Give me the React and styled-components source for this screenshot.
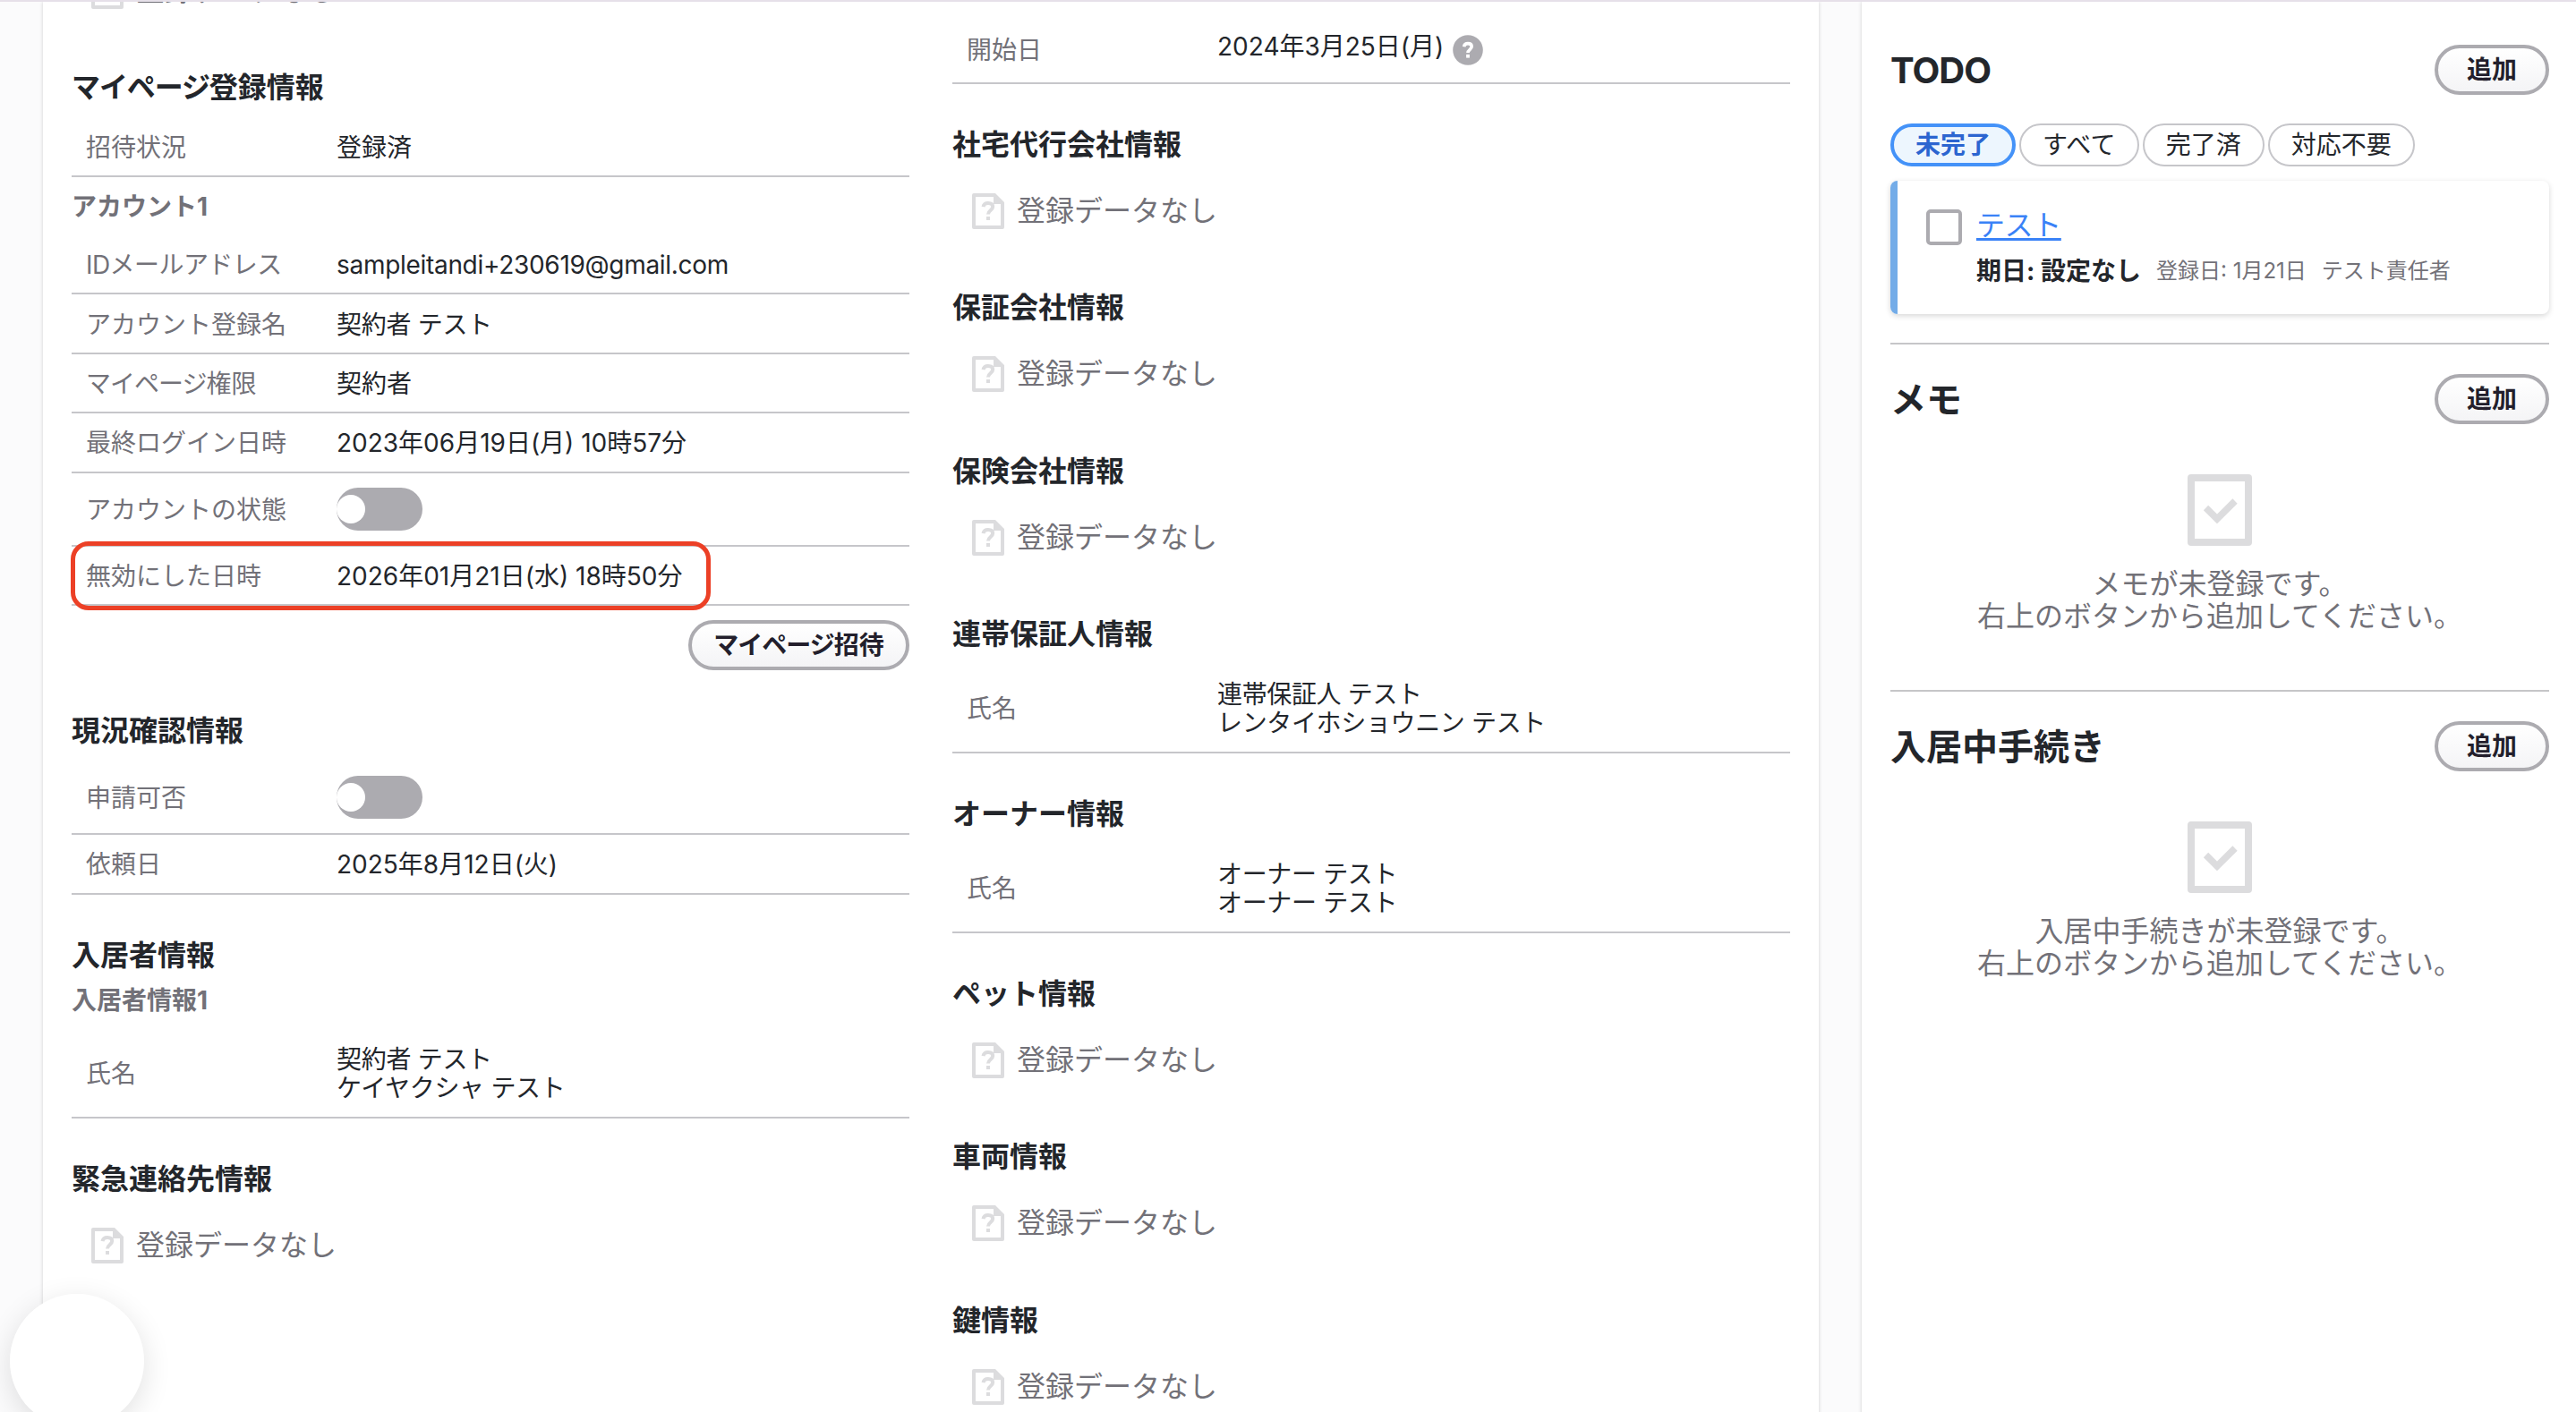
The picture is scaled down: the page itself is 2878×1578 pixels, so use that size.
import styled, { createGlobalStyle } from "styled-components";

const GlobalStyle = createGlobalStyle`
  * {
    box-sizing: border-box;
  }

  body {
    margin: 0;
    overflow: hidden;
    background-color: #fbfbfc;
    color: #23262b;
    font-family: "Inter", "Noto Sans CJK JP", sans-serif;
    font-size: 28px;
    line-height: 32px;
  }
`;

// --- 全体レイアウト ---
const Page = styled.div`
  width: 2880px;
  height: 1578px;
  display: flex;
  gap: 48px;
  padding-left: 48px;
  border-top: 2px solid #e6e0e9;
  overflow: hidden;
`;

const Panel = styled.div`
  height: 1580px;
  padding: 0 32px;
  background-color: #fff;
  box-shadow: 0 0 4px rgba(0, 0, 0, 0.18);
`;

const MainPanel = styled(Panel)`
  width: 1984px;
  display: flex;
  gap: 48px;
`;

const SidePanel = styled(Panel)`
  width: 800px;
`;

const Column = styled.div`
  width: 936px;
  margin-top: ${({ $offset }) => $offset}px;
`;

// --- セクション ---
const Section = styled.section`
  padding-top: 44px;
`;

const SectionTitle = styled.h2`
  margin: 0 0 11.6px;
  padding-top: 2px;
  font-size: 32px;
  font-weight: 700;
  line-height: 44px;
`;

const SubTitle = styled.h3`
  margin: ${({ $spaced }) => ($spaced ? "16px" : "0")} 0 15px;
  font-size: 28px;
  font-weight: 700;
  line-height: 34px;
  color: #727178;
`;

// 長音まわりの字間を詰める
const Tight = styled.span`
  letter-spacing: ${({ $em }) => $em || -0.035}em;
`;

// --- 項目行 ---
const Row = styled.div`
  position: relative;
  height: ${({ $height }) => $height || 66.4}px;
  display: flex;
  align-items: center;
  padding-left: 16px;
  border-bottom: 2px solid #c6c6ca;
`;

const Label = styled.div`
  width: 280px;
  flex-shrink: 0;
  padding-top: 2px;
  color: #727178;
`;

const Value = styled.div`
  display: flex;
  align-items: center;
  gap: 10px;
  padding-top: 2px;
  white-space: pre-line;
  letter-spacing: ${({ $tracking }) => $tracking || 0}px;
`;

const DateText = styled.span`
  padding-bottom: 8px;
`;

const Highlight = styled.div`
  position: absolute;
  top: -6px;
  left: -1px;
  width: 715px;
  height: 77px;
  border: 5px solid #ec4026;
  border-radius: 20px;
`;

const Toggle = styled.div`
  width: 96px;
  height: 48px;
  display: flex;
  align-items: center;
  border-radius: 24px;
  background-color: #acabb0;
`;

const Knob = styled.div`
  width: 32px;
  height: 32px;
  border-radius: 50%;
  background-color: #fff;
`;

// --- データなし ---
const EmptyRow = styled.div`
  display: flex;
  align-items: center;
  gap: 14px;
  padding: 20.4px 0 20.4px 22px;
  font-size: 32px;
  line-height: 40px;
  color: #727178;

  svg {
    display: block;
  }
`;

// --- ボタン ---
const Button = styled.button`
  height: 56px;
  width: ${({ $width }) => $width}px;
  padding: 0;
  border: 4px solid #acabb0;
  border-radius: 28px;
  background: linear-gradient(#fff, #f4f4f6);
  color: #231f2c;
  font-family: inherit;
  font-size: 28px;
  font-weight: 700;
  line-height: 32px;
  white-space: nowrap;
`;

const ButtonArea = styled.div`
  display: flex;
  justify-content: flex-end;
  margin-top: 16px;
`;

// --- サイドパネル ---
const SideSection = styled.section`
  height: 388px;
  padding-top: 33px;

  & + & {
    border-top: 2px solid #c6c6c8;
  }
`;

const TodoSection = styled(SideSection)`
  height: 381px;
  padding-top: 48px;
`;

const SideHeader = styled.div`
  display: flex;
  justify-content: space-between;
  align-items: center;
`;

const SideTitle = styled.h1`
  margin: 0;
  padding-top: 2px;
  font-size: 40px;
  font-weight: 700;
  line-height: 48px;
  letter-spacing: ${({ $tracking }) => $tracking || 0}px;
`;

const Tabs = styled.div`
  display: flex;
  gap: 4px;
  margin-top: 32px;
`;

const Tab = styled.div`
  height: 48px;
  display: flex;
  align-items: center;
  padding: 0 24px;
  border: ${({ $active }) => ($active ? "4px solid #4492f8" : "2px solid #c6c6ca")};
  border-radius: 24px;
  background-color: ${({ $active }) => ($active ? "#edf6fe" : "#fff")};
  color: ${({ $active }) => ($active ? "#2c65d0" : "#23262b")};
  font-weight: ${({ $active }) => ($active ? 700 : 400)};
  letter-spacing: ${({ $tracking }) => $tracking || 0}px;
`;

const Card = styled.div`
  height: 149px;
  display: flex;
  gap: 16px;
  margin-top: 16px;
  padding: 32px;
  border-left: 8px solid #73ace8;
  border-radius: 8px;
  box-shadow: 0 2px 6px rgba(0, 0, 0, 0.16);
`;

const Checkbox = styled.div`
  width: 40px;
  height: 40px;
  border: 4px solid #acabb0;
  border-radius: 5px;
`;

const CardLink = styled.a`
  display: block;
  width: fit-content;
  font-size: 32px;
  line-height: 36px;
  letter-spacing: -0.4px;
  color: #3a82f7;
  text-decoration: underline;
  text-decoration-thickness: 3px;
  text-underline-offset: 3px;
`;

const CardMeta = styled.div`
  display: flex;
  align-items: center;
  gap: 17px;
  margin-top: 17px;
  font-size: 24px;
  color: #727178;
`;

const DueDate = styled.span`
  font-size: 28px;
  font-weight: 700;
  color: #23262b;
`;

const Blank = styled.div`
  display: flex;
  flex-direction: column;
  align-items: center;
  gap: 25px;
  margin-top: 56px;
  font-size: 32px;
  line-height: 36px;
  text-align: center;
  color: #727178;

  svg {
    display: block;
  }
`;

const BlankText = styled.p`
  margin: 0;
  white-space: pre-line;
`;

// --- フローティングボタン ---
const ChatBubble = styled.div`
  position: fixed;
  left: 11px;
  top: 1446px;
  width: 150px;
  height: 150px;
  border-radius: 50%;
  background-color: #fff;
  box-shadow: 0 8px 32px rgba(0, 0, 0, 0.12);
`;

// --- アイコン ---
const FileIcon = () => (
  <svg width="36" height="40" viewBox="0 0 36 40" fill="none">
    <path
      fill="#dcdcde"
      fillRule="evenodd"
      d="M2 0H26L36 10V38a2 2 0 0 1-2 2H2a2 2 0 0 1-2-2V2a2 2 0 0 1 2-2ZM4 4V36H32V12H24V4Z"
    />
    <path
      d="M12.5 15.2C13 12.4 15 11.1 18 11.1c3.200 0 5.200 1.500 5.200 4 0 4-5.200 4-5.200 8.500"
      stroke="#dcdcde"
      strokeWidth="4"
    />
    <rect x="16" y="26" width="4" height="4" fill="#dcdcde" />
  </svg>
);

const HelpIcon = () => (
  <svg width="34" height="34" viewBox="0 0 34 34" fill="none">
    <circle cx="17" cy="17" r="16.8" fill="#acabb0" />
    <path
      d="M12.600 13.200c.4-2.400 2-3.600 4.400-3.600 2.600 0 4.200 1.300 4.200 3.500 0 3.200-4.200 3.200-4.200 7"
      stroke="#fff"
      strokeWidth="3.6"
    />
    <rect x="15.100" y="21.800" width="3.8" height="3.8" fill="#fff" />
  </svg>
);

const CheckIcon = () => (
  <svg width="72" height="80" viewBox="0 0 72 80" fill="none" stroke="#dcdcde">
    <rect x="4" y="4" width="64" height="72" strokeWidth="8" strokeLinejoin="round" />
    <path d="M20.500 37.500 33 50 53 30" strokeWidth="7.5" />
  </svg>
);

const Empty = () => (
  <EmptyRow>
    <FileIcon />
    登録データなし
  </EmptyRow>
);

const Switch = () => (
  <Toggle>
    <Knob />
  </Toggle>
);

const accountRows = [
  {
    label: <Tight $em={-0.02}>IDメールアドレス</Tight>,
    value: "sampleitandi+230619@gmail.com",
    tracking: -0.3,
  },
  { label: "アカウント登録名", value: "契約者 テスト", tracking: -0.3 },
  { label: <><Tight>マイページ</Tight>権限</>, value: "契約者" },
  { label: "最終ログイン日時", value: "2023年06月19日(月) 10時57分" },
];

const detailSections = [
  { title: "社宅代行会社情報" },
  { title: "保証会社情報" },
  { title: "保険会社情報" },
  { title: "連帯保証人情報", name: "連帯保証人 テスト\nレンタイホショウニン テスト" },
  { title: "オーナー情報", name: "オーナー テスト\nオーナー テスト" },
  { title: "ペット情報" },
  { title: "車両情報" },
  { title: "鍵情報" },
];

const blankSections = ["メモ", "入居中手続き"];

export default function App() {
  return (
    <>
      <GlobalStyle />
      <Page>
        <MainPanel>
          <Column $offset={-52.8}>
            <Empty />
            <Section>
              <SectionTitle><Tight>マイページ</Tight>登録情報</SectionTitle>
              <Row>
                <Label>招待状況</Label>
                <Value>登録済</Value>
              </Row>
              <SubTitle $spaced>アカウント1</SubTitle>
              {accountRows.map(({ label, value, tracking }) => (
                <Row key={value}>
                  <Label>{label}</Label>
                  <Value $tracking={tracking}>{value}</Value>
                </Row>
              ))}
              <Row $height={82.4}>
                <Label>アカウントの状態</Label>
                <Switch />
              </Row>
              <Row>
                <Label>無効にした日時</Label>
                <Value>2026年01月21日(水) 18時50分</Value>
                <Highlight />
              </Row>
              <ButtonArea>
                <Button $width={247}><Tight>マイページ</Tight>招待</Button>
              </ButtonArea>
            </Section>
            <Section>
              <SectionTitle>現況確認情報</SectionTitle>
              <Row $height={82.4}>
                <Label>申請可否</Label>
                <Switch />
              </Row>
              <Row>
                <Label>依頼日</Label>
                <Value>2025年8月12日(火)</Value>
              </Row>
            </Section>
            <Section>
              <SectionTitle>入居者情報</SectionTitle>
              <SubTitle>入居者情報1</SubTitle>
              <Row $height={99.8}>
                <Label>氏名</Label>
                <Value $tracking={-0.3}>{"契約者 テスト\nケイヤクシャ テスト"}</Value>
              </Row>
            </Section>
            <Section>
              <SectionTitle>緊急連絡先情報</SectionTitle>
              <Empty />
            </Section>
          </Column>
          <Column $offset={16.8}>
            <Row $height={75.2}>
              <Label>開始日</Label>
              <Value>
                <DateText>2024年3月25日(月)</DateText>
                <HelpIcon />
              </Value>
            </Row>
            {detailSections.map(({ title, name }) => (
              <Section key={title}>
                <SectionTitle>{title}</SectionTitle>
                {name ? (
                  <Row $height={99.4}>
                    <Label>氏名</Label>
                    <Value $tracking={-0.35}>{name}</Value>
                  </Row>
                ) : (
                  <Empty />
                )}
              </Section>
            ))}
          </Column>
        </MainPanel>
        <SidePanel>
          <TodoSection>
            <SideHeader>
              <SideTitle $tracking={-1}>TODO</SideTitle>
              <Button $width={128}>追加</Button>
            </SideHeader>
            <Tabs>
              <Tab $active>未完了</Tab>
              <Tab $tracking={0.3}>すべて</Tab>
              <Tab>完了済</Tab>
              <Tab>対応不要</Tab>
            </Tabs>
            <Card>
              <Checkbox />
              <div>
                <CardLink>テスト</CardLink>
                <CardMeta>
                  <DueDate>期日: 設定なし</DueDate>
                  <span>登録日: 1月21日</span>
                  <span>テスト責任者</span>
                </CardMeta>
              </div>
            </Card>
          </TodoSection>
          {blankSections.map((title) => (
            <SideSection key={title}>
              <SideHeader>
                <SideTitle>{title}</SideTitle>
                <Button $width={128}>追加</Button>
              </SideHeader>
              <Blank>
                <CheckIcon />
                <BlankText>{`${title}が未登録です。\n右上のボタンから追加してください。`}</BlankText>
              </Blank>
            </SideSection>
          ))}
        </SidePanel>
      </Page>
      <ChatBubble />
    </>
  );
}
